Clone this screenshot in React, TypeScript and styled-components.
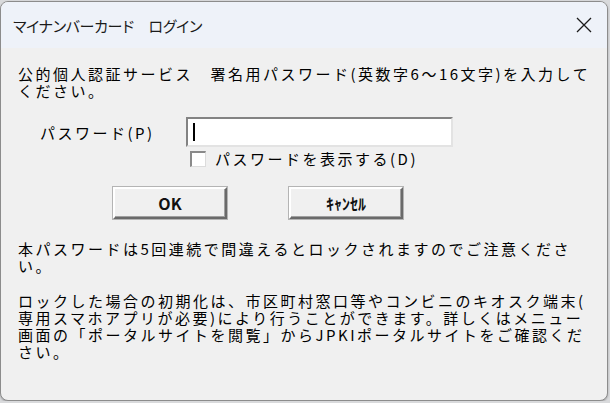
import React from 'react'
import styled, { createGlobalStyle } from 'styled-components'

const GlobalStyle = createGlobalStyle`
    body {
        margin: 0;
        background-color: #d9dadc;
        font-family: "Noto Sans CJK JP", sans-serif;
    }
`

const Window = styled.div`
    width: 606px;
    height: 398px;
    margin-top: 1px;
    border: 1px solid #8c8c8c;
    border-radius: 8px;
    background-color: #f0f0f0;
    overflow: hidden;
    display: flex;
    flex-direction: column;
    box-shadow: 0 1px 2px rgba(0, 0, 0, 0.25);
`

const TitleBar = styled.div`
    height: 46px;
    flex-shrink: 0;
    display: flex;
    align-items: center;
    justify-content: space-between;
    padding-left: 12px;
    padding-right: 14px;
    background-color: #eef2f9;
`

const Title = styled.span`
    font-size: 15px;
    color: #1b1b1b;
    font-feature-settings: "palt";
    letter-spacing: -0.3px;
`

const CloseButton = styled.button`
    width: 18px;
    height: 18px;
    padding: 0;
    border: none;
    background: none;
    display: flex;
    align-items: center;
    justify-content: center;
`

const Body = styled.div`
    padding: 17px 17px 0 17px;
    font-size: 15px;
    line-height: 17px;
    letter-spacing: 2.5px;
    color: #000;
    white-space: nowrap;
`

const Paragraph = styled.p<{ gap?: number }>`
    margin: 0;
    margin-top: ${({ gap }) => gap || 0}px;
`

const FormGrid = styled.div`
    display: grid;
    grid-template-columns: 146px 267px;
    row-gap: 3px;
    padding-left: 22px;
    margin-top: 18px;
    align-items: center;
`

const Label = styled.label`
    font-size: 15px;
`

const PasswordBox = styled.div`
    height: 30px;
    box-sizing: border-box;
    background-color: #fff;
    border-top: 2px solid #838383;
    border-left: 2px solid #838383;
    border-right: 2px solid #e3e3e3;
    border-bottom: 2px solid #e3e3e3;
    display: flex;
    align-items: center;
    padding-left: 5px;
`

const Caret = styled.span`
    width: 2px;
    height: 18px;
    background-color: #000;
`

const CheckRow = styled.label`
    grid-column: 2;
    display: flex;
    align-items: center;
    gap: 9px;
    padding-left: 4px;
    font-size: 15px;
`

const CheckBox = styled.span`
    width: 16px;
    height: 16px;
    box-sizing: border-box;
    background-color: #fff;
    border-top: 2px solid #8a8a8a;
    border-left: 2px solid #8a8a8a;
    border-right: 1px solid #dcdcdc;
    border-bottom: 1px solid #dcdcdc;
`

const ButtonRow = styled.div`
    display: flex;
    gap: 62px;
    padding-left: 95px;
    margin-top: 20px;
`

const Button = styled.button`
    width: 114px;
    height: 32px;
    box-sizing: border-box;
    background-color: #f0f0f0;
    border-top: 2px solid #ffffff;
    border-left: 2px solid #ffffff;
    border-right: 2px solid #6a6a6a;
    border-bottom: 2px solid #6a6a6a;
    box-shadow: inset -1px -1px 0 #a0a0a0, 0 0 0 1px #b4b4b4;
    font-family: "Noto Sans CJK JP", sans-serif;
    font-size: 16px;
    font-weight: 600;
    letter-spacing: 0;
    color: #111;
`

function CloseIcon() {
  return (
    <svg width="16" height="16" viewBox="0 0 16 16">
      <path d="M1 1 L15 15 M15 1 L1 15" stroke="#1a1a1a" strokeWidth="1.3" fill="none" />
    </svg>
  )
}

function App() {
  return (
    <>
      <GlobalStyle />
      <Window>
        <TitleBar>
          <Title>マイナンバーカード　ログイン</Title>
          <CloseButton aria-label="閉じる">
            <CloseIcon />
          </CloseButton>
        </TitleBar>

        <Body>
          <Paragraph>
            公的個人認証サービス　署名用パスワード(英数字6～16文字)を入力して
            <br />
            ください。
          </Paragraph>

          <FormGrid>
            <Label>パスワード(P)</Label>
            <PasswordBox>
              <Caret />
            </PasswordBox>
            <CheckRow>
              <CheckBox />
              パスワードを表示する(D)
            </CheckRow>
          </FormGrid>

          <ButtonRow>
            <Button>OK</Button>
            <Button>ｷｬﾝｾﾙ</Button>
          </ButtonRow>

          <Paragraph gap={21}>
            本パスワードは5回連続で間違えるとロックされますのでご注意くださ
            <br />
            い。
          </Paragraph>

          <Paragraph gap={18}>
            ロックした場合の初期化は、市区町村窓口等やコンビニのキオスク端末(
            <br />
            専用スマホアプリが必要)により行うことができます。詳しくはメニュー
            <br />
            画面の「ポータルサイトを閲覧」からJPKIポータルサイトをご確認くだ
            <br />
            さい。
          </Paragraph>
        </Body>
      </Window>
    </>
  )
}

export default App
